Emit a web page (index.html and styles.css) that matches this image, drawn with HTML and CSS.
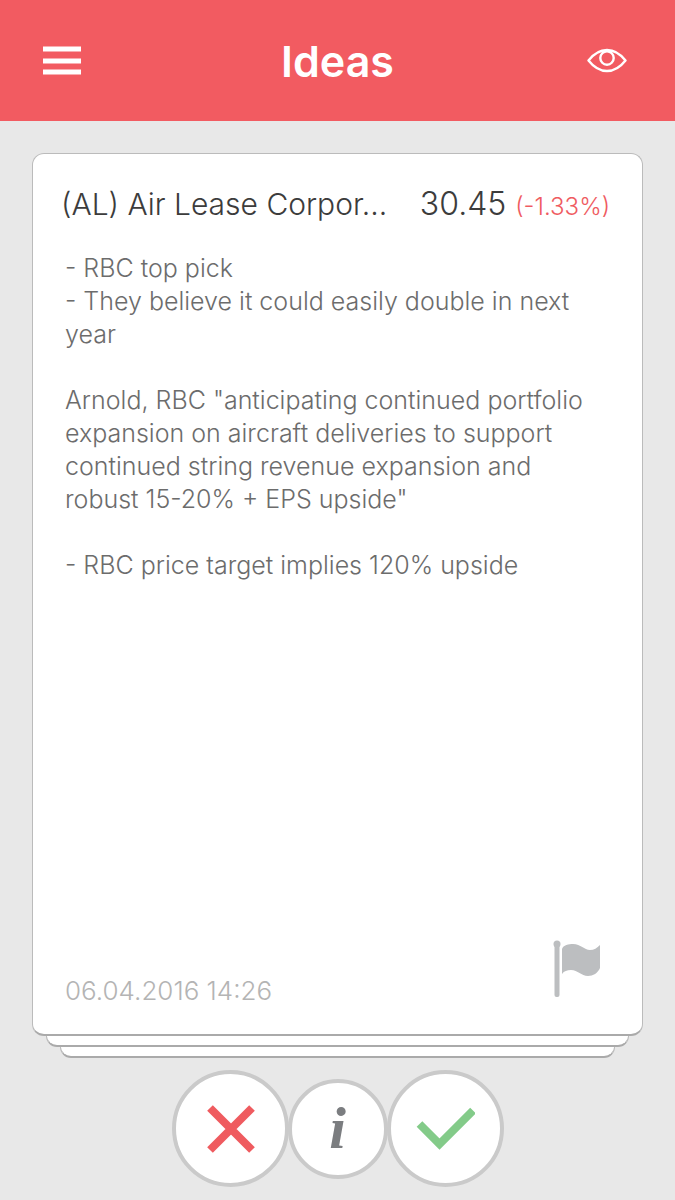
FILE: index.html
```html
<!DOCTYPE html>
<html lang="en">
<head>
    <meta charset="UTF-8">
    <meta name="viewport" content="width=device-width, initial-scale=1.0">
    <title>Ideas</title>
    <link rel="stylesheet" href="styles.css">
</head>
<body>

    <header class="navbar">
        <button type="button" class="nav-btn" aria-label="Menu">
            <svg width="40" height="30" viewBox="0 0 40 30" fill="#fff">
                <rect x="1" y="0.500" width="38" height="5"/>
                <rect x="1" y="12.500" width="38" height="5"/>
                <rect x="1" y="23.500" width="38" height="5"/>
            </svg>
        </button>
        <h1 class="navbar-title">Ideas</h1>
        <button type="button" class="nav-btn watch-btn" aria-label="Watch list">
            <svg width="40" height="30" viewBox="0 0 40 30" fill="none" stroke="#fff" stroke-width="2.400">
                <path d="M1.500 14.500C7 7.500 13 4 20 4S33 7.500 38.500 14.500C33 21.500 27 25 20 25S7 21.500 1.500 14.500Z" stroke-linejoin="round"/>
                <circle cx="20" cy="12" r="6.700"/>
            </svg>
        </button>
    </header>

    <main class="deck">
        <article class="card">
            <div class="card-head">
                <h2 class="card-title">(AL) Air Lease Corpor...</h2>
                <p class="price">30.45 <span class="change">(-1.33%)</span></p>
            </div>

            <div class="card-body">
                <p>- RBC top pick<br>- They believe it could easily double in next year</p>
                <p>Arnold, RBC "anticipating continued portfolio expansion on aircraft deliveries to support continued string revenue expansion and robust 15-20% + EPS upside"</p>
                <p>- RBC price target implies 120% upside</p>
            </div>

            <div class="card-foot">
                <time class="date" datetime="2016-04-06T14:26">06.04.2016 14:26</time>
                <button type="button" class="flag-btn" aria-label="Flag">
                    <svg width="48" height="58" viewBox="0 0 48 58" fill="#bcbec0">
                        <circle cx="4" cy="4" r="3.500"/>
                        <rect x="1.500" y="3" width="5" height="54" rx="2"/>
                        <path d="M9 9C10 5 16 4 20 4C28 4 31 10 37 10C41 10 44 8 47 5V28C45 33 40 36 35 36C28 36 25 30 18 30C14 30 11 31 9 34Z"/>
                    </svg>
                </button>
            </div>
        </article>
        <div class="card-under"></div>
        <div class="card-under card-last"></div>
    </main>

    <footer class="actions">
        <button type="button" class="round-btn" aria-label="Reject">
            <svg width="50" height="50" viewBox="0 0 50 50" stroke="#ef5b5f" stroke-width="8">
                <path d="M5 4L47 46M47 4L5 46"/>
            </svg>
        </button>
        <button type="button" class="round-btn info-btn" aria-label="Info">i</button>
        <button type="button" class="round-btn" aria-label="Accept">
            <svg width="60" height="50" viewBox="0 0 60 50" fill="none" stroke="#83cb89" stroke-width="8">
                <path d="M4.500 20L24.500 40L58 6.500"/>
            </svg>
        </button>
    </footer>

</body>
</html>
```

FILE: styles.css
```css
* {
    box-sizing: border-box;
}

body {
    font-family: Inter, 'Liberation Sans', sans-serif;
    font-weight: 300;
    margin: 0;
    background-color: #e8e8e8;
    color: #3c3c3c;
    display: flex;
    flex-direction: column;
    min-height: 100vh;
}

h1, h2, p {
    margin: 0;
}

button {
    background: none;
    border: none;
    padding: 0;
    font: inherit;
    cursor: pointer;
}

svg {
    display: block;
}

/* Top bar */
.navbar {
    background-color: #f25b61;
    color: #fff;
    display: grid;
    grid-template-columns: 1fr auto 1fr;
    align-items: center;
    height: 121px;
    padding: 0 42px;
}

.nav-btn {
    justify-self: start;
}

.watch-btn {
    justify-self: end;
    padding-right: 6px;
}

.navbar-title {
    font-size: 43px;
    font-weight: 600;
}

/* Card deck */
.deck {
    flex: 1;
    display: flex;
    flex-direction: column;
    padding: 32px 32px 12px;
}

.card {
    flex: 1;
    display: flex;
    flex-direction: column;
    background-color: #fff;
    border: 1px solid #bbb;
    border-bottom: 2px solid #aaa;
    border-radius: 12px;
    padding: 30px 32px 36px;
}

.card-head {
    display: flex;
    justify-content: space-between;
    align-items: baseline;
    margin: 0 0 25px -4px;
    white-space: nowrap;
}

.card-title {
    font-size: 30px;
    font-weight: 300;
    line-height: 40px;
}

.price {
    font-size: 32px;
    line-height: 40px;
}

.change {
    color: #ef5b61;
    font-size: 24px;
}

.card-body {
    flex: 1;
    color: #6c6c6c;
    font-size: 25px;
    line-height: 33px;
}

.card-body p {
    margin-bottom: 33px;
}

.card-foot {
    display: flex;
    justify-content: space-between;
    align-items: flex-end;
    padding-right: 9px;
}

.date {
    color: #b4b4b4;
    font-size: 26px;
    line-height: 14px;
}

.card-under {
    height: 11px;
    margin: 0 14px;
    background-color: #fff;
    border: 1px solid #bbb;
    border-top: none;
    border-bottom: 2px solid #aaa;
    border-radius: 0 0 12px 12px;
}

.card-last {
    margin: 0 28px;
}

/* Bottom buttons */
.actions {
    display: flex;
    justify-content: center;
    align-items: center;
    padding-bottom: 13px;
}

.round-btn {
    display: flex;
    justify-content: center;
    align-items: center;
    width: 117px;
    height: 117px;
    background-color: #fff;
    border: 4px solid #cacaca;
    border-radius: 50%;
}

.info-btn {
    width: 100px;
    height: 100px;
    margin: 0 -1px;
    color: #7b7d80;
    font-family: 'Liberation Serif', serif;
    font-size: 60px;
    font-style: italic;
    font-weight: 700;
}
```
